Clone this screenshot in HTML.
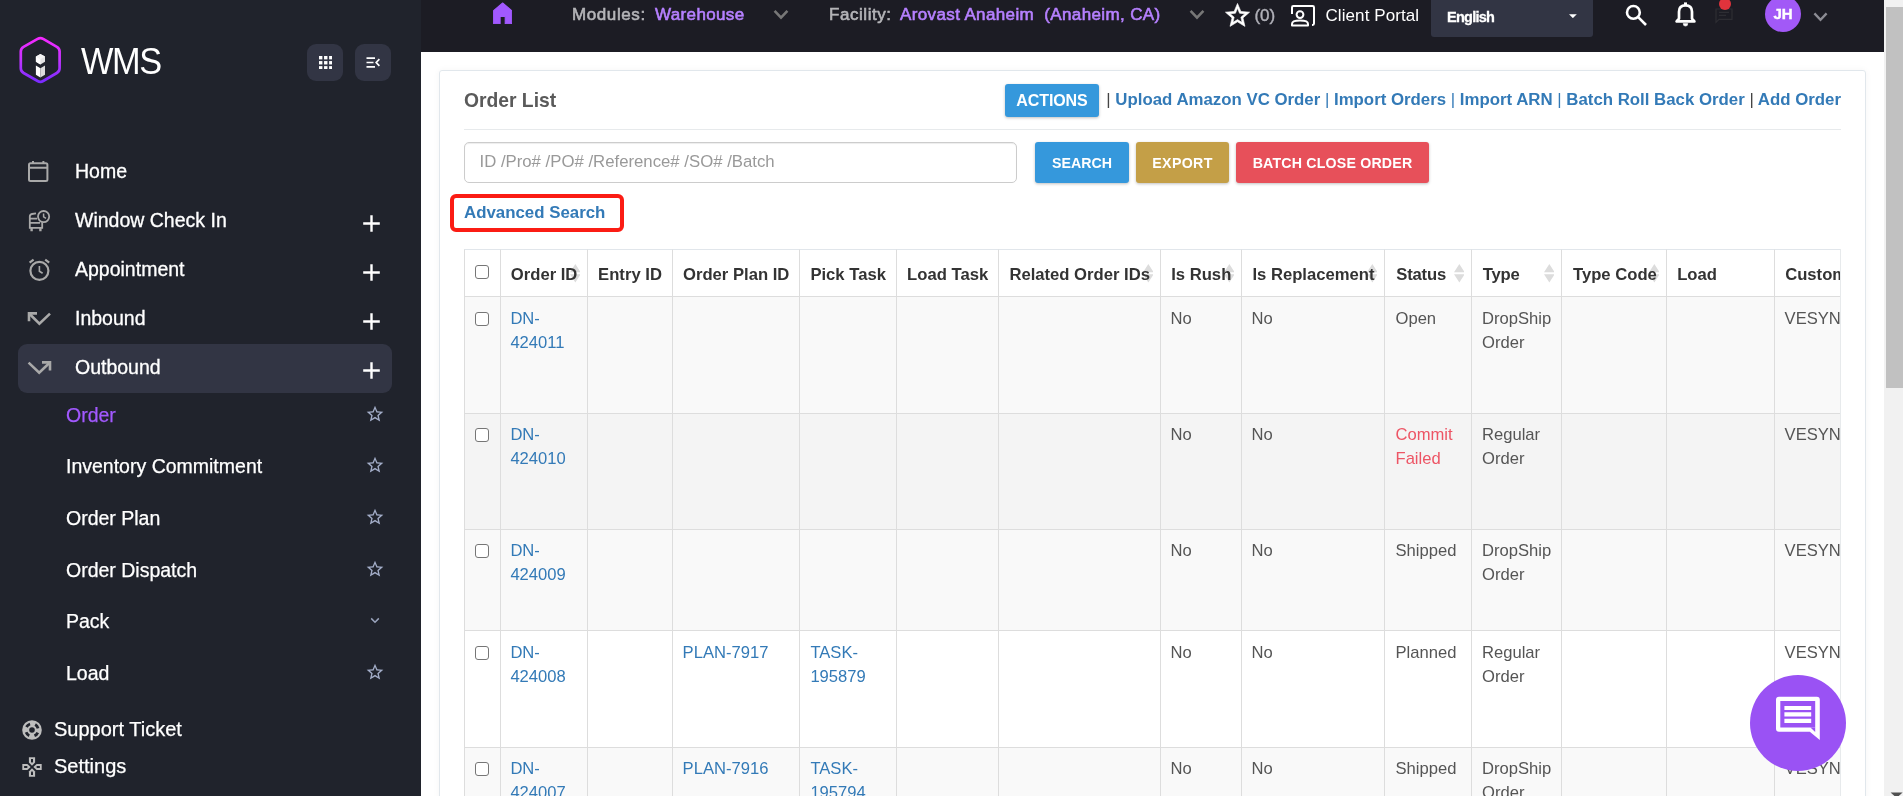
<!DOCTYPE html>
<html>
<head>
<meta charset="utf-8">
<title>Order List</title>
<style>
*{box-sizing:border-box;margin:0;padding:0}
html,body{width:1903px;height:796px;overflow:hidden;background:#fff;font-family:"Liberation Sans",sans-serif;}
body{position:relative}
.abs{position:absolute}
#root{position:absolute;left:0;top:0;width:1903px;height:796px;overflow:hidden;will-change:transform}
/* sidebar */
#side{position:absolute;left:0;top:0;width:421px;height:796px;background:#20232c;color:#fff}
#side .t{position:absolute;white-space:nowrap;color:#fff;font-size:19.5px;line-height:24px;-webkit-text-stroke:.3px #fff}
#side .s{position:absolute;white-space:nowrap;color:#fff;font-size:19.5px;line-height:24px;-webkit-text-stroke:.25px currentColor}
.sqbtn{position:absolute;width:36px;height:37px;border-radius:9px;background:#323544}
/* topbar */
#top{position:absolute;left:421px;top:0;width:1463px;height:52px;background:#1c1c24}
#top .t{position:absolute;white-space:nowrap;font-size:17px;line-height:22px;top:4px}
#top .tb{-webkit-text-stroke:.6px currentColor}
/* scrollbar */
#sb{position:absolute;left:1884px;top:0;width:19px;height:796px;background:#f1f1f1}
#sb .th{position:absolute;left:2px;top:7px;width:17px;height:381px;background:#c1c1c1}
/* card */
#card{position:absolute;left:439px;top:70px;width:1427px;height:760px;border:1px solid #e1e7ec;border-radius:3px;background:#fff;box-shadow:0 0 7px rgba(0,0,0,.045)}
.btn{position:absolute;color:#fff;font-weight:bold;text-align:center;border-radius:3px;box-shadow:0 1px 3px rgba(0,0,0,.25)}
a{color:#337ab7;text-decoration:none}
/* table */
#tw{position:absolute;left:464px;top:249px;width:1377px;height:560px;overflow:hidden;font-size:16.6px;line-height:23.7px;color:#555}
#tw .th,#tw .td{position:absolute;border-left:1px solid #ddd;border-top:1px solid #ddd;padding:10px 0 0 9.6px;white-space:nowrap;overflow:hidden}
#tw .th{font-weight:bold;color:#333;padding-top:13px;font-size:16.65px;border-top-color:#e1e6eb}
.srt{position:absolute;right:7.7px;top:14.2px}
.p{font-weight:normal}
.cb{display:block;width:14px;height:14px;border:1.5px solid #767676;border-radius:3px;background:#fff;margin-top:5px;margin-left:.6px}
.red{color:#ed5565}
</style>
</head>
<body>
<div id="root">
<div id="side">
<svg class="abs" style="left:14px;top:30px" width="54" height="60" viewBox="0 0 54 60">
<defs><linearGradient id="lg" x1="0" y1="0" x2="0" y2="1"><stop offset="0" stop-color="#f428ff"/><stop offset="0.5" stop-color="#c234ff"/><stop offset="1" stop-color="#7a2bff"/></linearGradient></defs>
<path d="M23.62 8.88Q26.40 7.30 29.17 8.90L42.83 16.80Q45.60 18.40 45.60 21.60L45.60 38.20Q45.60 41.40 42.84 43.01L29.16 50.99Q26.40 52.60 23.62 51.01L9.58 42.99Q6.80 41.40 6.80 38.20L6.80 21.60Q6.80 18.40 9.58 16.82Z" fill="none" stroke="url(#lg)" stroke-width="2.7" stroke-linejoin="round"/>
<path d="M26.4 24 L31 26.6 L31 31.8 L26.4 34.4 L21.9 31.8 L21.9 26.6 Z" fill="#e4e4e4"/>
<path d="M26.4 24 L31 26.6 L26.4 29.2 L21.9 26.6 Z" fill="#f4f4f4"/>
<path d="M21.9 26.6 L26.4 29.2 L26.4 34.4 L21.9 31.8 Z" fill="#fff"/>
<path d="M21.9 35.6 L26.4 38.2 L26.4 47.4 L21.9 44.8 Z" fill="#fff"/>
<path d="M31 35.6 L26.4 38.2 L26.4 47.4 L31 44.8 Z" fill="#dcdcdc"/>
</svg>
<div class="abs" style="left:81px;top:41px;font-size:36.5px;line-height:42px;letter-spacing:-1.5px;color:#fff;transform:scaleX(.94);transform-origin:0 0">WMS</div>
<div class="sqbtn" style="left:307px;top:44px"><svg class="abs" style="left:11.5px;top:11.8px" width="13.5" height="13.5" viewBox="0 0 12 12" fill="#fff"><rect x="0" y="0" width="3" height="3"/><rect x="4.5" y="0" width="3" height="3"/><rect x="9" y="0" width="3" height="3"/><rect x="0" y="4.5" width="3" height="3"/><rect x="4.5" y="4.5" width="3" height="3"/><rect x="9" y="4.5" width="3" height="3"/><rect x="0" y="9" width="3" height="3"/><rect x="4.5" y="9" width="3" height="3"/><rect x="9" y="9" width="3" height="3"/></svg></div>
<div class="sqbtn" style="left:355px;top:44px"><svg class="abs" style="left:11px;top:13px" width="14" height="11" viewBox="0 0 14 11" fill="none" stroke="#fff" stroke-width="1.7"><path d="M0.5 1.2H9M0.5 5.5H7.5M0.5 9.8H9M13.4 2.2L10.2 5.5L13.4 8.8"/></svg></div>

<!-- Home icon (calendar) -->
<svg class="abs" style="left:27px;top:160px" width="23" height="23" viewBox="0 0 23 23" fill="none" stroke="#a9a9a9" stroke-width="2"><rect x="2" y="3.2" width="18.4" height="17.8" rx="1.5"/><path d="M2 7.8H20.4M6 1V4M16.4 1V4"/></svg>
<div class="t" style="left:75px;top:159px">Home</div>

<!-- Window Check In icon -->
<svg class="abs" style="left:27px;top:208px" width="25" height="25" viewBox="0 0 25 25" fill="none" stroke="#a9a9a9" stroke-width="1.8"><path d="M9 5.4 L5 6 Q2.8 6.4 2.8 8.6 V19.9 H15.2 V14.5"/><path d="M2.8 10.6H10M2.8 14.8H13"/><path d="M4.6 19.8V23.2M13.4 19.8V23.2" stroke-width="2.4"/><circle cx="16.6" cy="8.6" r="5.6"/><path d="M16.6 5.4V8.8L19 10.4" stroke-width="1.5"/></svg>
<div class="t" style="left:75px;top:208px">Window Check In</div>

<!-- Appointment icon -->
<svg class="abs" style="left:27px;top:256.5px" width="25" height="25" viewBox="0 0 25 25" fill="none" stroke="#a9a9a9" stroke-width="2.2"><circle cx="12.4" cy="13.8" r="9"/><path d="M12.4 9V14.2L15.6 16.2" stroke-width="1.6"/><path d="M2.6 5.6L6.6 2.6M22.2 5.6L18.2 2.6" stroke-width="2.2"/></svg>
<div class="t" style="left:75px;top:257px">Appointment</div>

<!-- Inbound icon -->
<svg class="abs" style="left:26px;top:309.6px" width="27" height="18" viewBox="0 0 27 18" fill="none" stroke="#a9a9a9" stroke-width="2.6"><path d="M3 11.2V3.4H11"/><path d="M3.4 3.8L13.4 13.6L24 3.6"/></svg>
<div class="t" style="left:75px;top:306px">Inbound</div>

<div class="abs" style="left:18px;top:344px;width:374px;height:49px;border-radius:9px;background:#323544"></div>
<!-- Outbound icon -->
<svg class="abs" style="left:26px;top:358.8px" width="27" height="18" viewBox="0 0 27 18" fill="none" stroke="#a9a9a9" stroke-width="2.6"><path d="M16 3.4H24V11.4"/><path d="M2.6 3.6L13.2 13.6L23.6 3.8"/></svg>
<div class="t" style="left:75px;top:355px">Outbound</div>
<svg class="abs" style="left:363.0px;top:214.8px" width="17" height="17" viewBox="0 0 17 17" stroke="#fff" stroke-width="2.4" fill="none"><path d="M8.5 0.2V16.8M0.2 8.5H16.8"/></svg>
<svg class="abs" style="left:363.0px;top:263.7px" width="17" height="17" viewBox="0 0 17 17" stroke="#fff" stroke-width="2.4" fill="none"><path d="M8.5 0.2V16.8M0.2 8.5H16.8"/></svg>
<svg class="abs" style="left:363.0px;top:312.8px" width="17" height="17" viewBox="0 0 17 17" stroke="#fff" stroke-width="2.4" fill="none"><path d="M8.5 0.2V16.8M0.2 8.5H16.8"/></svg>
<svg class="abs" style="left:363.0px;top:361.6px" width="17" height="17" viewBox="0 0 17 17" stroke="#fff" stroke-width="2.4" fill="none"><path d="M8.5 0.2V16.8M0.2 8.5H16.8"/></svg>
<div class="s" style="left:66px;top:403px;color:#a259ff">Order</div>
<svg class="abs" style="left:365.3px;top:404.0px" width="20" height="20" viewBox="0 0 24 24" fill="#a3adc8"><path d="M22 9.24l-7.19-.62L12 2 9.19 8.63 2 9.24l5.46 4.73L5.82 21 12 17.27 18.18 21l-1.63-7.03L22 9.24zM12 15.4l-3.76 2.27 1-4.28-3.32-2.88 4.38-.38L12 6.1l1.71 4.04 4.38.38-3.32 2.88 1 4.28L12 15.4z"/></svg>
<div class="s" style="left:66px;top:454px;color:#fff">Inventory Commitment</div>
<svg class="abs" style="left:365.3px;top:455.0px" width="20" height="20" viewBox="0 0 24 24" fill="#a3adc8"><path d="M22 9.24l-7.19-.62L12 2 9.19 8.63 2 9.24l5.46 4.73L5.82 21 12 17.27 18.18 21l-1.63-7.03L22 9.24zM12 15.4l-3.76 2.27 1-4.28-3.32-2.88 4.38-.38L12 6.1l1.71 4.04 4.38.38-3.32 2.88 1 4.28L12 15.4z"/></svg>
<div class="s" style="left:66px;top:506px;color:#fff">Order Plan</div>
<svg class="abs" style="left:365.3px;top:507.0px" width="20" height="20" viewBox="0 0 24 24" fill="#a3adc8"><path d="M22 9.24l-7.19-.62L12 2 9.19 8.63 2 9.24l5.46 4.73L5.82 21 12 17.27 18.18 21l-1.63-7.03L22 9.24zM12 15.4l-3.76 2.27 1-4.28-3.32-2.88 4.38-.38L12 6.1l1.71 4.04 4.38.38-3.32 2.88 1 4.28L12 15.4z"/></svg>
<div class="s" style="left:66px;top:558px;color:#fff">Order Dispatch</div>
<svg class="abs" style="left:365.3px;top:559.0px" width="20" height="20" viewBox="0 0 24 24" fill="#a3adc8"><path d="M22 9.24l-7.19-.62L12 2 9.19 8.63 2 9.24l5.46 4.73L5.82 21 12 17.27 18.18 21l-1.63-7.03L22 9.24zM12 15.4l-3.76 2.27 1-4.28-3.32-2.88 4.38-.38L12 6.1l1.71 4.04 4.38.38-3.32 2.88 1 4.28L12 15.4z"/></svg>
<div class="s" style="left:66px;top:609px;color:#fff">Pack</div>
<svg class="abs" style="left:370px;top:617px" width="10" height="7" viewBox="0 0 10 7" fill="none" stroke="#9aa4bd" stroke-width="1.5"><path d="M1.2 1.4L5 5.2L8.8 1.4"/></svg>
<div class="s" style="left:66px;top:661px;color:#fff">Load</div>
<svg class="abs" style="left:365.3px;top:662.0px" width="20" height="20" viewBox="0 0 24 24" fill="#a3adc8"><path d="M22 9.24l-7.19-.62L12 2 9.19 8.63 2 9.24l5.46 4.73L5.82 21 12 17.27 18.18 21l-1.63-7.03L22 9.24zM12 15.4l-3.76 2.27 1-4.28-3.32-2.88 4.38-.38L12 6.1l1.71 4.04 4.38.38-3.32 2.88 1 4.28L12 15.4z"/></svg>

<svg class="abs" style="left:22px;top:719.5px" width="20" height="20" viewBox="-10 -10 20 20"><circle r="9.8" fill="#bdbdbd"/><circle r="2.8" fill="#20232c"/><circle r="6.3" fill="none" stroke="#20232c" stroke-width="2.8" stroke-dasharray="4.6 5.296" transform="rotate(24)"/></svg>
<div class="s" style="left:54px;top:717px;font-size:20px">Support Ticket</div>
<svg class="abs" style="left:22px;top:756.6px" width="20" height="20" viewBox="-10 -10 20 20"><path d="M-3.1 -9.7H3.1V-4.6L0 -1.3L-3.1 -4.6Z" fill="#bdbdbd"/><path d="M-1 -7.9H1V-5.2L0 -4.1L-1 -5.2Z" fill="#20232c"/><g transform="rotate(90)"><path d="M-3.1 -9.7H3.1V-4.6L0 -1.3L-3.1 -4.6Z" fill="#bdbdbd"/><path d="M-1 -7.9H1V-5.2L0 -4.1L-1 -5.2Z" fill="#20232c"/></g><g transform="rotate(180)"><path d="M-3.1 -9.7H3.1V-4.6L0 -1.3L-3.1 -4.6Z" fill="#bdbdbd"/><path d="M-1 -7.9H1V-5.2L0 -4.1L-1 -5.2Z" fill="#20232c"/></g><g transform="rotate(270)"><path d="M-3.1 -9.7H3.1V-4.6L0 -1.3L-3.1 -4.6Z" fill="#bdbdbd"/><path d="M-1 -7.9H1V-5.2L0 -4.1L-1 -5.2Z" fill="#20232c"/></g></svg>
<div class="s" style="left:54px;top:754px;font-size:20px">Settings</div>
</div>
<div id="top">
<svg class="abs" style="left:72px;top:1.6px" width="19.3" height="22.4" viewBox="0 0 20 22" preserveAspectRatio="none"><path d="M10 1 L19.4 8.4 V21.4 H12.6 V14.2 H7.4 V21.4 H0.6 V8.4 Z" fill="#a259ff" stroke="#a259ff" stroke-width="1" stroke-linejoin="round"/></svg>
<div class="t tb" style="left:151px;color:#b4b4b8;letter-spacing:.6px">Modules:</div>
<div class="t tb" style="left:234px;color:#b680ff;letter-spacing:.35px">Warehouse</div>
<svg class="abs" style="left:352px;top:9px" width="16" height="12" viewBox="0 0 16 12" fill="none" stroke="#777" stroke-width="2.6"><path d="M1.6 1.8L8 8.6L14.4 1.8"/></svg>
<div class="t tb" style="left:408px;color:#b4b4b8;letter-spacing:.55px">Facility:</div>
<div class="t tb" style="left:479px;color:#b680ff;letter-spacing:.37px">Arovast Anaheim&nbsp; (Anaheim, CA)</div>
<svg class="abs" style="left:768px;top:9px" width="16" height="12" viewBox="0 0 16 12" fill="none" stroke="#777" stroke-width="2.6"><path d="M1.6 1.8L8 8.6L14.4 1.8"/></svg>
<svg class="abs" style="left:802.4px;top:1.1px" width="29" height="29" viewBox="0 0 24 24" fill="#fff" stroke="#fff" stroke-width=".5"><path d="M22 9.24l-7.19-.62L12 2 9.19 8.63 2 9.24l5.46 4.73L5.82 21 12 17.27 18.18 21l-1.63-7.03L22 9.24zM12 15.4l-3.76 2.27 1-4.28-3.32-2.88 4.38-.38L12 6.1l1.71 4.04 4.38.38-3.32 2.88 1 4.28L12 15.4z"/></svg>
<div class="t" style="left:834px;color:#b0b0b8;top:5px;-webkit-text-stroke:.4px #b0b0b8;margin-left:-.6px">(0)</div>
<svg class="abs" style="left:869px;top:4px" width="26" height="24" viewBox="0 0 26 24" fill="none" stroke="#fff" stroke-width="2"><path d="M2 10V3.4Q2 2 3.4 2H22.6Q24 2 24 3.4V19.6Q24 21 22.6 21H22"/><circle cx="10" cy="10.6" r="3.4"/><path d="M2 21.6V20Q2 16.6 10 16.6Q18 16.6 18 20V21.6Z" stroke-linejoin="round"/></svg>
<div class="t" style="left:904.5px;top:5px;color:#fff;letter-spacing:.08px">Client Portal</div>
<div class="abs" style="left:1010px;top:0;width:162px;height:37px;background:#323544;border-radius:0 0 3px 3px"></div>
<div class="t" style="left:1026px;top:6px;color:#fff;font-weight:bold;font-size:14.5px;letter-spacing:-.75px;-webkit-text-stroke:.3px #fff">English</div>
<svg class="abs" style="left:1148.2px;top:13.8px" width="7.8" height="4.6" viewBox="0 0 9 5"><path d="M0 0H9L4.5 4.6Z" fill="#fff"/></svg>
<svg class="abs" style="left:1203px;top:3px" width="25" height="24" viewBox="0 0 25 24" fill="none" stroke="#fff" stroke-width="2.6"><circle cx="9.4" cy="9.4" r="6.4"/><path d="M14.2 14.2L22 22"/></svg>
<svg class="abs" style="left:1253px;top:1px" width="23" height="26" viewBox="0 0 23 26" fill="none" stroke="#fff" stroke-width="2.7"><path d="M2.6 20.4H20.4L18 17.6V10.8Q18 4.4 11.5 4.4Q5 4.4 5 10.8V17.6Z" stroke-linejoin="round"/><path d="M11.5 1.4V4" stroke-width="3"/><path d="M9.2 22.6A2.3 2.5 0 0 0 13.8 22.6Z" fill="#fff" stroke-width=".6"/></svg>
<svg class="abs" style="left:1294px;top:8px" width="18" height="16" viewBox="0 0 18 16" fill="none" stroke="#2d2d33" stroke-width="1.2"><path d="M1 1H17V11.4H4L1 14.4Z"/><path d="M4 4.4H14M4 7.4H11"/></svg>
<div class="abs" style="left:1298px;top:-2px;width:12px;height:12px;border-radius:50%;background:#e0333c"></div>
<div class="abs" style="left:1344px;top:-4px;width:36px;height:36px;border-radius:50%;background:#a259f7;color:#fff;font-weight:bold;font-size:15px;line-height:36px;text-align:center;letter-spacing:-.2px;-webkit-text-stroke:.4px #fff">JH</div>
<svg class="abs" style="left:1392px;top:12px" width="15" height="10" viewBox="0 0 15 10" fill="none" stroke="#8c8c94" stroke-width="2.3"><path d="M1.4 1.4L7.5 7.8L13.6 1.4"/></svg>
</div>
<div id="sb"><div class="th"></div><svg class="abs" style="left:6px;top:792px" width="13" height="6" viewBox="0 0 13 6"><path d="M0.6 0.4H12.6L6.6 6Z" fill="#505050"/></svg></div>
<!--MAIN--><div id="card"></div>
<div class="abs" style="left:464px;top:88.5px;font-size:19.3px;line-height:24px;font-weight:bold;color:#5a5a5a;white-space:nowrap">Order List</div>
<div class="btn" style="left:1005px;top:84px;width:94px;height:33px;background:#3598dc;font-size:16px;line-height:33px;letter-spacing:-.1px">ACTIONS</div>
<div class="abs lk" style="right:62px;top:89px;font-size:16.82px;line-height:22px;font-weight:bold;white-space:nowrap;color:#337ab7"><span class="p" style="color:#444">|</span> Upload Amazon VC Order <span class="p">|</span> Import Orders <span class="p">|</span> Import ARN <span class="p">|</span> Batch Roll Back Order <span class="p" style="color:#444">|</span> Add Order</div>
<div class="abs" style="left:464px;top:129px;width:1377px;height:1px;background:#e7eaec"></div>
<div class="abs" style="left:464px;top:142px;width:553px;height:41px;border:1px solid #ccc;border-radius:5px;background:#fff;box-shadow:inset 0 1px 1px rgba(0,0,0,.075);font-size:16.75px;line-height:37px;color:#999;padding-left:14.5px;white-space:nowrap">ID /Pro# /PO# /Reference# /SO# /Batch</div>
<div class="btn" style="left:1035px;top:142px;width:94px;height:41px;background:#3598dc;font-size:14.2px;line-height:43px">SEARCH</div>
<div class="btn" style="left:1136px;top:142px;width:93px;height:41px;background:#c49f47;font-size:14.2px;line-height:43px;letter-spacing:.35px">EXPORT</div>
<div class="btn" style="left:1236px;top:142px;width:193px;height:41px;background:#e7505a;font-size:14.2px;line-height:43px;letter-spacing:.18px">BATCH CLOSE ORDER</div>
<div class="abs" style="left:450px;top:194px;width:174px;height:38px;border:4px solid #fb1c14;border-radius:6px"></div>
<div class="abs" style="left:464px;top:202px;font-size:16.85px;line-height:22px;font-weight:bold;color:#337ab7;white-space:nowrap">Advanced Search</div>
<div id="tw">
<div class="th" style="left:0px;top:0px;width:37px;height:48px;background:#fff"><i class="cb" style="margin-top:1.7px"></i></div>
<div class="th" style="left:36px;top:0px;width:88px;height:48px;background:#fff;padding-left:9.8px"><svg class="srt" width="10.7" height="18.5" viewBox="0 0 10.7 18.5"><path d="M5.35 0L10.7 8.2H0Z M5.35 18.5L10.7 10.3H0Z" fill="#dcdcdc"/></svg><span style="position:relative">Order ID</span></div>
<div class="th" style="left:123px;top:0px;width:86px;height:48px;background:#fff;padding-left:10.1px"><span style="position:relative">Entry ID</span></div>
<div class="th" style="left:208px;top:0px;width:128px;height:48px;background:#fff;padding-left:10px"><span style="position:relative">Order Plan ID</span></div>
<div class="th" style="left:335px;top:0px;width:98px;height:48px;background:#fff;padding-left:10.4px"><span style="position:relative">Pick Task</span></div>
<div class="th" style="left:432px;top:0px;width:103px;height:48px;background:#fff;padding-left:10.1px"><span style="position:relative">Load Task</span></div>
<div class="th" style="left:534px;top:0px;width:163px;height:48px;background:#fff;padding-left:10.4px"><svg class="srt" width="10.7" height="18.5" viewBox="0 0 10.7 18.5"><path d="M5.35 0L10.7 8.2H0Z M5.35 18.5L10.7 10.3H0Z" fill="#dcdcdc"/></svg><span style="position:relative">Related Order IDs</span></div>
<div class="th" style="left:696px;top:0px;width:82px;height:48px;background:#fff;padding-left:10.2px"><svg class="srt" width="10.7" height="18.5" viewBox="0 0 10.7 18.5"><path d="M5.35 0L10.7 8.2H0Z M5.35 18.5L10.7 10.3H0Z" fill="#dcdcdc"/></svg><span style="position:relative">Is Rush</span></div>
<div class="th" style="left:777px;top:0px;width:144px;height:48px;background:#fff;padding-left:10.4px"><svg class="srt" width="10.7" height="18.5" viewBox="0 0 10.7 18.5"><path d="M5.35 0L10.7 8.2H0Z M5.35 18.5L10.7 10.3H0Z" fill="#dcdcdc"/></svg><span style="position:relative">Is Replacement</span></div>
<div class="th" style="left:920px;top:0px;width:88px;height:48px;background:#fff;padding-left:11.3px;letter-spacing:-.2px"><svg class="srt" width="10.7" height="18.5" viewBox="0 0 10.7 18.5"><path d="M5.35 0L10.7 8.2H0Z M5.35 18.5L10.7 10.3H0Z" fill="#dcdcdc"/></svg><span style="position:relative">Status</span></div>
<div class="th" style="left:1007px;top:0px;width:91px;height:48px;background:#fff;padding-left:10.8px;letter-spacing:-.25px"><svg class="srt" width="10.7" height="18.5" viewBox="0 0 10.7 18.5"><path d="M5.35 0L10.7 8.2H0Z M5.35 18.5L10.7 10.3H0Z" fill="#dcdcdc"/></svg><span style="position:relative">Type</span></div>
<div class="th" style="left:1097px;top:0px;width:106px;height:48px;background:#fff;padding-left:11.0px"><svg class="srt" width="10.7" height="18.5" viewBox="0 0 10.7 18.5"><path d="M5.35 0L10.7 8.2H0Z M5.35 18.5L10.7 10.3H0Z" fill="#dcdcdc"/></svg><span style="position:relative">Type Code</span></div>
<div class="th" style="left:1202px;top:0px;width:109px;height:48px;background:#fff;padding-left:10.2px"><span style="position:relative">Load</span></div>
<div class="th" style="left:1310px;top:0px;width:127px;height:48px;background:#fff;padding-left:10.2px"><span style="position:relative">Customer</span></div>
<div class="td" style="left:0px;top:47px;width:37px;height:118px;background:#f9f9f9"><i class="cb"></i></div>
<div class="td" style="left:36px;top:47px;width:88px;height:118px;background:#f9f9f9;padding-left:9.4px"><a>DN-<br>424011</a></div>
<div class="td" style="left:123px;top:47px;width:86px;height:118px;background:#f9f9f9"></div>
<div class="td" style="left:208px;top:47px;width:128px;height:118px;background:#f9f9f9"></div>
<div class="td" style="left:335px;top:47px;width:98px;height:118px;background:#f9f9f9;padding-left:10.4px"></div>
<div class="td" style="left:432px;top:47px;width:103px;height:118px;background:#f9f9f9"></div>
<div class="td" style="left:534px;top:47px;width:163px;height:118px;background:#f9f9f9"></div>
<div class="td" style="left:696px;top:47px;width:82px;height:118px;background:#f9f9f9">No</div>
<div class="td" style="left:777px;top:47px;width:144px;height:118px;background:#f9f9f9">No</div>
<div class="td" style="left:920px;top:47px;width:88px;height:118px;background:#f9f9f9;padding-left:10.5px">Open</div>
<div class="td" style="left:1007px;top:47px;width:91px;height:118px;background:#f9f9f9;padding-left:10.0px">DropShip<br>Order</div>
<div class="td" style="left:1097px;top:47px;width:106px;height:118px;background:#f9f9f9"></div>
<div class="td" style="left:1202px;top:47px;width:109px;height:118px;background:#f9f9f9"></div>
<div class="td" style="left:1310px;top:47px;width:127px;height:118px;background:#f9f9f9">VESYNC</div>
<div class="td" style="left:0px;top:164px;width:37px;height:117px;background:#f4f4f4;padding-top:9px"><i class="cb"></i></div>
<div class="td" style="left:36px;top:164px;width:88px;height:117px;background:#f4f4f4;padding-top:9px;padding-left:9.4px"><a>DN-<br>424010</a></div>
<div class="td" style="left:123px;top:164px;width:86px;height:117px;background:#f4f4f4;padding-top:9px"></div>
<div class="td" style="left:208px;top:164px;width:128px;height:117px;background:#f4f4f4;padding-top:9px"></div>
<div class="td" style="left:335px;top:164px;width:98px;height:117px;background:#f4f4f4;padding-top:9px;padding-left:10.4px"></div>
<div class="td" style="left:432px;top:164px;width:103px;height:117px;background:#f4f4f4;padding-top:9px"></div>
<div class="td" style="left:534px;top:164px;width:163px;height:117px;background:#f4f4f4;padding-top:9px"></div>
<div class="td" style="left:696px;top:164px;width:82px;height:117px;background:#f4f4f4;padding-top:9px">No</div>
<div class="td" style="left:777px;top:164px;width:144px;height:117px;background:#f4f4f4;padding-top:9px">No</div>
<div class="td" style="left:920px;top:164px;width:88px;height:117px;background:#f4f4f4;padding-top:9px;padding-left:10.5px"><span class="red">Commit<br>Failed</span></div>
<div class="td" style="left:1007px;top:164px;width:91px;height:117px;background:#f4f4f4;padding-top:9px;padding-left:10.0px">Regular<br>Order</div>
<div class="td" style="left:1097px;top:164px;width:106px;height:117px;background:#f4f4f4;padding-top:9px"></div>
<div class="td" style="left:1202px;top:164px;width:109px;height:117px;background:#f4f4f4;padding-top:9px"></div>
<div class="td" style="left:1310px;top:164px;width:127px;height:117px;background:#f4f4f4;padding-top:9px">VESYNC</div>
<div class="td" style="left:0px;top:280px;width:37px;height:102px;background:#f9f9f9;padding-top:9px"><i class="cb"></i></div>
<div class="td" style="left:36px;top:280px;width:88px;height:102px;background:#f9f9f9;padding-top:9px;padding-left:9.4px"><a>DN-<br>424009</a></div>
<div class="td" style="left:123px;top:280px;width:86px;height:102px;background:#f9f9f9;padding-top:9px"></div>
<div class="td" style="left:208px;top:280px;width:128px;height:102px;background:#f9f9f9;padding-top:9px"></div>
<div class="td" style="left:335px;top:280px;width:98px;height:102px;background:#f9f9f9;padding-top:9px;padding-left:10.4px"></div>
<div class="td" style="left:432px;top:280px;width:103px;height:102px;background:#f9f9f9;padding-top:9px"></div>
<div class="td" style="left:534px;top:280px;width:163px;height:102px;background:#f9f9f9;padding-top:9px"></div>
<div class="td" style="left:696px;top:280px;width:82px;height:102px;background:#f9f9f9;padding-top:9px">No</div>
<div class="td" style="left:777px;top:280px;width:144px;height:102px;background:#f9f9f9;padding-top:9px">No</div>
<div class="td" style="left:920px;top:280px;width:88px;height:102px;background:#f9f9f9;padding-top:9px;padding-left:10.5px">Shipped</div>
<div class="td" style="left:1007px;top:280px;width:91px;height:102px;background:#f9f9f9;padding-top:9px;padding-left:10.0px">DropShip<br>Order</div>
<div class="td" style="left:1097px;top:280px;width:106px;height:102px;background:#f9f9f9;padding-top:9px"></div>
<div class="td" style="left:1202px;top:280px;width:109px;height:102px;background:#f9f9f9;padding-top:9px"></div>
<div class="td" style="left:1310px;top:280px;width:127px;height:102px;background:#f9f9f9;padding-top:9px">VESYNC</div>
<div class="td" style="left:0px;top:381px;width:37px;height:118px;background:#fff"><i class="cb"></i></div>
<div class="td" style="left:36px;top:381px;width:88px;height:118px;background:#fff;padding-left:9.4px"><a>DN-<br>424008</a></div>
<div class="td" style="left:123px;top:381px;width:86px;height:118px;background:#fff"></div>
<div class="td" style="left:208px;top:381px;width:128px;height:118px;background:#fff"><a>PLAN-7917</a></div>
<div class="td" style="left:335px;top:381px;width:98px;height:118px;background:#fff;padding-left:10.4px"><a>TASK-<br>195879</a></div>
<div class="td" style="left:432px;top:381px;width:103px;height:118px;background:#fff"></div>
<div class="td" style="left:534px;top:381px;width:163px;height:118px;background:#fff"></div>
<div class="td" style="left:696px;top:381px;width:82px;height:118px;background:#fff">No</div>
<div class="td" style="left:777px;top:381px;width:144px;height:118px;background:#fff">No</div>
<div class="td" style="left:920px;top:381px;width:88px;height:118px;background:#fff;padding-left:10.5px">Planned</div>
<div class="td" style="left:1007px;top:381px;width:91px;height:118px;background:#fff;padding-left:10.0px">Regular<br>Order</div>
<div class="td" style="left:1097px;top:381px;width:106px;height:118px;background:#fff"></div>
<div class="td" style="left:1202px;top:381px;width:109px;height:118px;background:#fff"></div>
<div class="td" style="left:1310px;top:381px;width:127px;height:118px;background:#fff">VESYNC</div>
<div class="td" style="left:0px;top:498px;width:37px;height:118px;background:#f9f9f9;padding-top:9px"><i class="cb"></i></div>
<div class="td" style="left:36px;top:498px;width:88px;height:118px;background:#f9f9f9;padding-top:9px;padding-left:9.4px"><a>DN-<br>424007</a></div>
<div class="td" style="left:123px;top:498px;width:86px;height:118px;background:#f9f9f9;padding-top:9px"></div>
<div class="td" style="left:208px;top:498px;width:128px;height:118px;background:#f9f9f9;padding-top:9px"><a>PLAN-7916</a></div>
<div class="td" style="left:335px;top:498px;width:98px;height:118px;background:#f9f9f9;padding-top:9px;padding-left:10.4px"><a>TASK-<br>195794</a></div>
<div class="td" style="left:432px;top:498px;width:103px;height:118px;background:#f9f9f9;padding-top:9px"></div>
<div class="td" style="left:534px;top:498px;width:163px;height:118px;background:#f9f9f9;padding-top:9px"></div>
<div class="td" style="left:696px;top:498px;width:82px;height:118px;background:#f9f9f9;padding-top:9px">No</div>
<div class="td" style="left:777px;top:498px;width:144px;height:118px;background:#f9f9f9;padding-top:9px">No</div>
<div class="td" style="left:920px;top:498px;width:88px;height:118px;background:#f9f9f9;padding-top:9px;padding-left:10.5px">Shipped</div>
<div class="td" style="left:1007px;top:498px;width:91px;height:118px;background:#f9f9f9;padding-top:9px;padding-left:10.0px">DropShip<br>Order</div>
<div class="td" style="left:1097px;top:498px;width:106px;height:118px;background:#f9f9f9;padding-top:9px"></div>
<div class="td" style="left:1202px;top:498px;width:109px;height:118px;background:#f9f9f9;padding-top:9px"></div>
<div class="td" style="left:1310px;top:498px;width:127px;height:118px;background:#f9f9f9;padding-top:9px">VESYNC</div>
</div>
<div class="abs" style="left:1840px;top:249px;width:1px;height:560px;background:#e7eaec"></div>
<div class="abs" style="left:1750px;top:675px;width:96px;height:96px;border-radius:50%;background:#9a52f4"></div>
<svg class="abs" style="left:1775px;top:696px" width="46" height="46" viewBox="0 0 46 46"><path d="M4 0.7H41.8Q44.8 0.7 44.8 3.7V44L34.8 35.8H4Q1 35.8 1 32.8V3.7Q1 0.7 4 0.7Z" fill="#fff"/><rect x="5.3" y="5" width="34.9" height="26.5" fill="#9a52f4"/><path d="M9.4 12H36.2M9.4 18.4H36.2M9.4 24.8H36.2" stroke="#fff" stroke-width="4.2"/><path d="M40.2 31.5V36L35.4 31.5Z" fill="#9a52f4"/></svg><!--/MAIN-->
</div>
</body>
</html>
